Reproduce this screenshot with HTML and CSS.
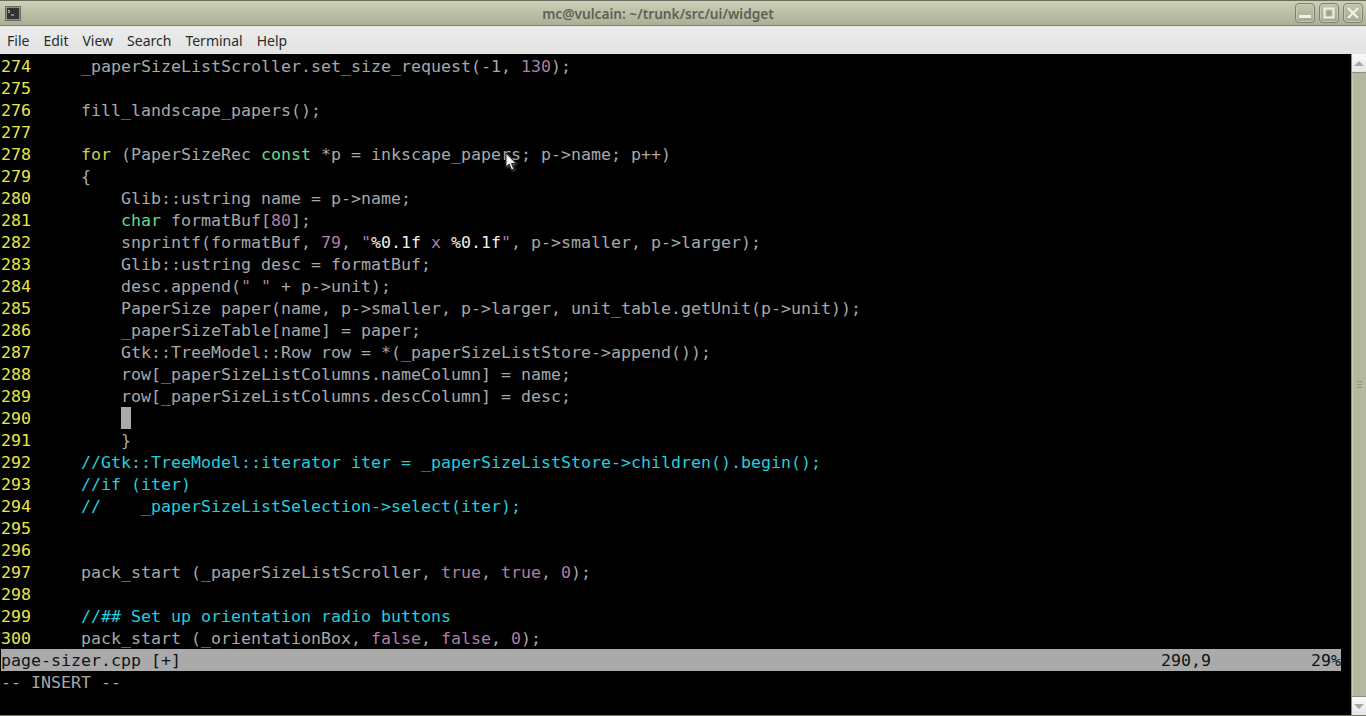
FILE: index.html
```html
<!DOCTYPE html>
<html lang="en">
<head>
<meta charset="utf-8">
<title>mc@vulcain: ~/trunk/src/ui/widget</title>
<link rel="stylesheet" href="styles.css">
</head>
<body>
<div class="window">
  <header class="titlebar">
    <svg class="app-icon" width="16" height="15" viewBox="0 0 16 15"><rect x="0.5" y="0.5" width="15" height="14" fill="#e4e6dc" stroke="#6a6c60"/><rect x="1.5" y="1.5" width="13" height="12" fill="#33352f"/><path d="M3 4l2 1.500-2 1.500M6 9h3" stroke="#d8dad0" fill="none"/></svg>
    <div class="title">mc@vulcain: ~/trunk/src/ui/widget</div>
    <div class="controls">
      <span class="wbtn"><svg width="20" height="20" viewBox="0 0 20 20"><rect x="4" y="12" width="12" height="3" fill="#f0f0e8"/></svg></span>
      <span class="wbtn"><svg width="20" height="20" viewBox="0 0 20 20"><rect x="5.500" y="5.500" width="9" height="9" fill="none" stroke="#f0f0e8" stroke-width="2"/><rect x="8" y="8" width="4" height="4" fill="#9da18a"/></svg></span>
      <span class="wbtn"><svg width="20" height="20" viewBox="0 0 20 20"><path d="M5 5l10 10M15 5L5 15" stroke="#f0f0e8" stroke-width="2.400"/></svg></span>
    </div>
  </header>
  <nav class="menubar">
    <span class="menu">File</span><span class="menu">Edit</span><span class="menu">View</span><span class="menu">Search</span><span class="menu">Terminal</span><span class="menu">Help</span>
  </nav>
  <main class="term-wrap">
    <div class="term">
<div class="ln"><b>274 </b>    _paperSizeListScroller.set_size_request(-1, <i>130</i>);</div>
<div class="ln"><b>275 </b></div>
<div class="ln"><b>276 </b>    fill_landscape_papers();</div>
<div class="ln"><b>277 </b></div>
<div class="ln"><b>278 </b>    <u>for</u> (PaperSizeRec <em>const</em> *p = inkscape_papers; p-&gt;name; p++)</div>
<div class="ln"><b>279 </b>    {</div>
<div class="ln"><b>280 </b>        Glib::ustring name = p-&gt;name;</div>
<div class="ln"><b>281 </b>        <em>char</em> formatBuf[<i>80</i>];</div>
<div class="ln"><b>282 </b>        snprintf(formatBuf, <i>79</i>, <i>"</i><s>%0.1f</s><i> x </i><s>%0.1f</s><i>"</i>, p-&gt;smaller, p-&gt;larger);</div>
<div class="ln"><b>283 </b>        Glib::ustring desc = formatBuf;</div>
<div class="ln"><b>284 </b>        desc.append(<i>" "</i> + p-&gt;unit);</div>
<div class="ln"><b>285 </b>        PaperSize paper(name, p-&gt;smaller, p-&gt;larger, unit_table.getUnit(p-&gt;unit));</div>
<div class="ln"><b>286 </b>        _paperSizeTable[name] = paper;</div>
<div class="ln"><b>287 </b>        Gtk::TreeModel::Row row = *(_paperSizeListStore-&gt;append());</div>
<div class="ln"><b>288 </b>        row[_paperSizeListColumns.nameColumn] = name;</div>
<div class="ln"><b>289 </b>        row[_paperSizeListColumns.descColumn] = desc;</div>
<div class="ln"><b>290 </b>        <span class="cursor"> </span></div>
<div class="ln"><b>291 </b>        }</div>
<div class="ln"><b>292 </b>    <span class="c">//Gtk::TreeModel::iterator iter = _paperSizeListStore-&gt;children().begin();</span></div>
<div class="ln"><b>293 </b>    <span class="c">//if (iter)</span></div>
<div class="ln"><b>294 </b>    <span class="c">//    _paperSizeListSelection-&gt;select(iter);</span></div>
<div class="ln"><b>295 </b></div>
<div class="ln"><b>296 </b></div>
<div class="ln"><b>297 </b>    pack_start (_paperSizeListScroller, <i>true</i>, <i>true</i>, <i>0</i>);</div>
<div class="ln"><b>298 </b></div>
<div class="ln"><b>299 </b>    <span class="c">//## Set up orientation radio buttons</span></div>
<div class="ln"><b>300 </b>    pack_start (_orientationBox, <i>false</i>, <i>false</i>, <i>0</i>);</div>
<div class="status"><span>page-sizer.cpp [+]</span><span class="ruler"><span>290,9</span><span>29%</span></span></div>
<div class="ln">-- INSERT --</div>
    </div>
    <div class="scrollbar">
      <div class="sb-btn sb-up"><span class="tri-up"></span></div>
      <div class="sb-trough"><span class="grip"></span></div>
      <div class="sb-btn sb-down"><span class="tri-down"></span></div>
    </div>
    <svg class="pointer" width="13" height="20" viewBox="0 0 13 20"><path d="M1 1v14l3.200-3 2.300 6 2.400-1-2.400-5.600h4.500z" fill="#f4f4f4" stroke="#222" stroke-width="1"/></svg>
  </main>
</div>
</body>
</html>
```
FILE: styles.css
```css
* { box-sizing: border-box; }
html, body { margin: 0; padding: 0; height: 100%; overflow: hidden; background: #000; }
.window { display: flex; flex-direction: column; width: 1366px; height: 716px; border-bottom: 1px solid #777a6a; }

.titlebar {
  height: 26px;
  flex: none;
  display: flex;
  align-items: center;
  padding: 0 3px 0 5px;
  position: relative;
  border-top: 1px solid #6b6d5f;
  border-bottom: 1px solid #7d806c;
  background: linear-gradient(#cdd0b6, #abaf95);
}
.app-icon { flex: none; }
.title {
  flex: 1;
  text-align: center;
  font: 600 13.7px "Noto Sans", sans-serif;
  color: #5f6155;
}
.controls { display: flex; gap: 4px; }
.wbtn {
  width: 20px;
  height: 20px;
  border: 1px solid #7f826e;
  border-radius: 4px;
  background: linear-gradient(#c3c6ac, #a3a78e);
  box-shadow: inset 0 0 0 1px #c8cbb5;
  display: flex;
  align-items: center;
  justify-content: center;
}
.wbtn svg { flex: none; margin: -1px; }

.menubar {
  height: 28px;
  flex: none;
  display: flex;
  align-items: center;
  padding-top: 1px;
  background: linear-gradient(#ececec, #e2e2e2);
  font: 14px "Noto Sans", sans-serif;
  color: #2b2b2b;
}
.menu { padding: 0 7px; }

.term-wrap { position: relative; display: flex; flex: 1; min-height: 0; }
.term {
  flex: 1;
  background: #000;
  padding: 1px 0 0 1px;
  font-family: "DejaVu Sans Mono", monospace;
  font-size: 16.61px;
  color: #a8a8a8;
}
.ln { height: 22px; line-height: 24px; white-space: pre; }
.ln b { font-weight: normal; color: #e6e64c; }
.ln i { font-style: normal; color: #ad7fa8; }
.ln u { text-decoration: none; color: #c4d44a; }
.ln em { font-style: normal; color: #6ad98a; }
.ln s { text-decoration: none; color: #eeeeee; }
.c { color: #24cede; }
.cursor { display: inline-block; width: 10px; height: 22px; background: #aaaaaa; vertical-align: top; }

.status {
  width: 1340px;
  height: 22px;
  line-height: 24px;
  background: #aaaaaa;
  color: #101418;
  display: flex;
  justify-content: space-between;
  white-space: pre;
}
.ruler { display: flex; width: 180px; justify-content: space-between; }

.scrollbar {
  flex: none;
  width: 15px;
  display: flex;
  flex-direction: column;
  background: #b3b89f;
  border-left: 1px solid #8d9080;
}
.sb-btn { flex: none; height: 19px; background: linear-gradient(#fafafa, #e6e6e6); display: flex; align-items: center; justify-content: center; }
.sb-up { border-bottom: 1px solid #8f9282; }
.sb-down { border-top: 1px solid #8f9282; }
.tri-up { border: 4px solid transparent; border-top: 0; border-bottom: 5px solid #a9a9a4; border-left-width: 5px; border-right-width: 5px; }
.tri-down { border: 4px solid transparent; border-bottom: 0; border-top: 5px solid #a9a9a4; border-left-width: 5px; border-right-width: 5px; }
.sb-trough { flex: 1; display: flex; align-items: center; justify-content: center; box-shadow: inset 1px 0 0 #c8ccb6; }
.grip { width: 5px; height: 7px; background: repeating-linear-gradient(#8f9380 0 1px, #b3b89f 1px 3px); }

.pointer { position: absolute; left: 505px; top: 98px; filter: drop-shadow(1px 1px 1px rgba(200,200,200,.45)); }
```
